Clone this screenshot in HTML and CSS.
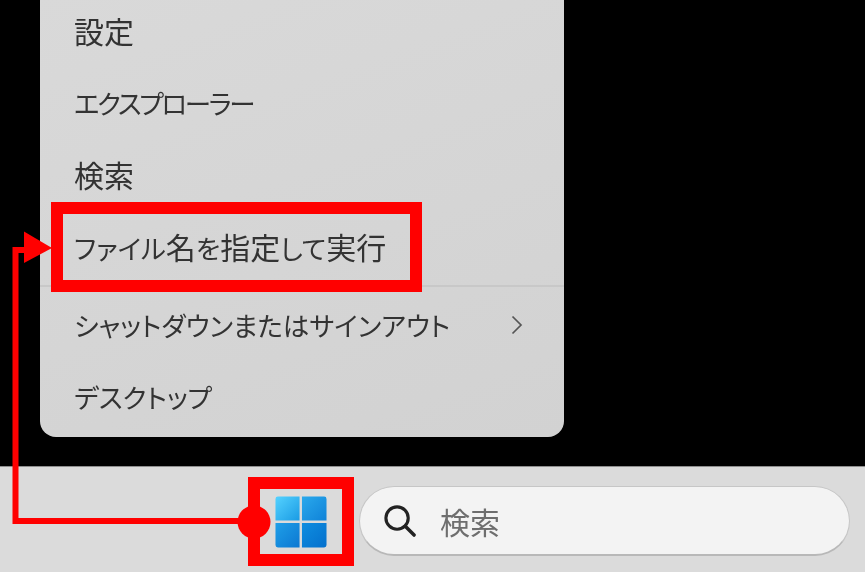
FILE: index.html
```html
<!DOCTYPE html>
<html lang="ja">
<head>
<meta charset="utf-8">
<title>ファイル名を指定して実行</title>
<link rel="stylesheet" href="styles.css">
</head>
<body>
<div class="screen">
  <main class="desktop">
    <nav class="menu">
      <div class="item"><span class="kanji">設定</span></div>
      <div class="item tight">エクスプローラー</div>
      <div class="item"><span class="kanji">検索</span></div>
      <div class="item"><span>ファイル<span class="kanji">名</span>を<span class="kanji">指定</span>して<span class="kanji">実行</span></span></div>
      <div class="rule"></div>
      <div class="item item-sub">
        <span>シャットダウンまたはサインアウト</span>
        <svg class="chevron" width="12" height="20" viewBox="0 0 12 20"><path d="M1.5 1.5 10 10 1.5 18.5" fill="none" stroke="#555" stroke-width="1.7"/></svg>
      </div>
      <div class="item">デスクトップ</div>
    </nav>
  </main>
  <footer class="taskbar">
    <div class="start">
      <svg width="52" height="52" viewBox="0 0 54 54">
        <defs>
          <linearGradient id="g1" x1="0" y1="0" x2="1" y2="1"><stop offset="0" stop-color="#55d2ff"/><stop offset="1" stop-color="#1a9be4"/></linearGradient>
          <linearGradient id="g2" x1="0" y1="0" x2="1" y2="1"><stop offset="0" stop-color="#2aa9ec"/><stop offset="1" stop-color="#0f82d8"/></linearGradient>
          <linearGradient id="g3" x1="0" y1="0" x2="1" y2="1"><stop offset="0" stop-color="#1f9fe8"/><stop offset="1" stop-color="#0c78d2"/></linearGradient>
          <linearGradient id="g4" x1="0" y1="0" x2="1" y2="1"><stop offset="0" stop-color="#0f8ee0"/><stop offset="1" stop-color="#0470cd"/></linearGradient>
        </defs>
        <path d="M3 0.5H25.500V25.500H0.500V3A2.500 2.500 0 0 1 3 0.500Z" fill="url(#g1)"/>
        <path d="M28 0.5H51A2.500 2.500 0 0 1 53.500 3V25.500H28Z" fill="url(#g2)"/>
        <path d="M0.500 28H25.500V53.500H3A2.500 2.500 0 0 1 0.500 51Z" fill="url(#g3)"/>
        <path d="M28 28H53.500V51A2.500 2.500 0 0 1 51 53.500H28Z" fill="url(#g4)"/>
      </svg>
    </div>
    <div class="search">
      <svg width="33" height="33" viewBox="0 0 34 34"><circle cx="14.500" cy="14.500" r="11.500" fill="none" stroke="#222" stroke-width="3.200"/><path d="M23 23 32 32" fill="none" stroke="#222" stroke-width="3.600" stroke-linecap="round"/></svg>
      <span class="search-text">検索</span>
    </div>
  </footer>
  <div class="frame frame-run"></div>
  <div class="frame frame-start"></div>
  <svg class="connector" width="865" height="572" viewBox="0 0 865 572">
    <path d="M30 250H15.500V521H254" fill="none" stroke="#f00" stroke-width="6"/>
    <path d="M24 231.500 52 248 24 263Z" fill="#f00"/>
    <circle cx="254" cy="522" r="16.500" fill="#f00"/>
  </svg>
</div>
</body>
</html>
```
FILE: styles.css
```css
html, body {
  margin: 0;
  padding: 0;
  height: 572px;
  overflow: hidden;
  background: #000;
}

.screen {
  position: relative;
  display: flex;
  flex-direction: column;
  width: 865px;
  height: 572px;
  overflow: hidden;
  font-family: "Noto Sans CJK JP", "Noto Sans", sans-serif;
  color: #333;
}

.desktop {
  flex: none;
  height: 466px;
  padding-left: 40px;
  background: #000;
}

.menu {
  box-sizing: border-box;
  width: 524px;
  height: 443px;
  margin-top: -6px;
  background: linear-gradient(160deg, #d9d9d9, #d2d2d2);
  border-radius: 0 0 16px 16px;
  padding-left: 34px;
  padding-right: 34px;
}

.item {
  display: flex;
  align-items: center;
  justify-content: space-between;
  height: 72px;
  font-size: 26.5px;
  font-weight: 400;
  font-feature-settings: "palt";
  white-space: nowrap;
  filter: blur(0.3px);
}

.kanji {
  font-size: 30px;
}

.tight {
  letter-spacing: -2.3px;
}

.rule {
  height: 2px;
  margin: 3px -34px -1px -34px;
  background: #c8c8c8;
}

.item-sub {
  height: 77px;
}

.item:last-child {
  height: 66px;
}

.chevron {
  flex: none;
  margin-right: 7px;
}

.taskbar {
  flex: 1;
  display: flex;
  align-items: flex-start;
  border-top: 1px solid #8e8e8e;
  background: #dbdbdb;
}

.start {
  display: flex;
  margin: 29px 32px 0 275px;
}

.search {
  box-sizing: border-box;
  display: flex;
  align-items: center;
  gap: 24px;
  width: 491px;
  height: 70px;
  margin-top: 19px;
  padding-left: 23px;
  border: 1px solid #c6c6c6;
  border-bottom: 2px solid #b8b8b8;
  border-radius: 35px;
  background: #f3f3f3;
}

.search-text {
  font-size: 30px;
  font-weight: 400;
  color: #6e6e6e;
  filter: blur(0.3px);
}

.frame {
  position: absolute;
  box-sizing: border-box;
  border: 12px solid #f00;
}

.frame-run {
  left: 51px;
  top: 202px;
  width: 371px;
  height: 90px;
}

.frame-start {
  left: 248px;
  top: 477px;
  width: 106px;
  height: 89px;
}

.connector {
  position: absolute;
  left: 0;
  top: 0;
}
```
